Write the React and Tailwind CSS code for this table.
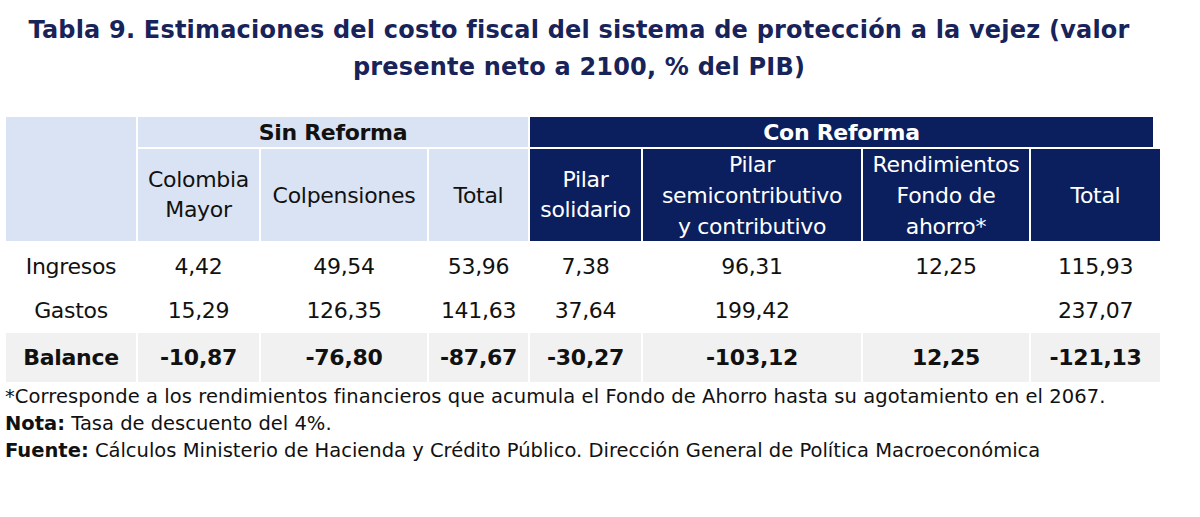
import React from 'react';

// Columnas: etiqueta, 3 sin reforma, 4 con reforma
const FONT = { fontFamily: '"DejaVu Sans", Verdana, sans-serif' };

const ROWS = [
  { label: 'Ingresos', values: ['4,42', '49,54', '53,96', '7,38', '96,31', '12,25', '115,93'] },
  { label: 'Gastos', values: ['15,29', '126,35', '141,63', '37,64', '199,42', '', '237,07'] },
];

const BALANCE = ['-10,87', '-76,80', '-87,67', '-30,27', '-103,12', '12,25', '-121,13'];

const light = 'bg-[#dae3f3] text-[#111]';
const dark = 'bg-[#0b1f5e] text-white';

export default function App() {
  return (
    <div className="w-[1200px] h-[517px] bg-white overflow-hidden" style={FONT}>
      {/* Título */}
      <div className="w-[1158px] pt-[12px] text-center text-[#18235a] text-[24px] leading-[37px] tracking-[0.2px] font-bold">
        Tabla 9. Estimaciones del costo fiscal del sistema de protección a la vejez (valor
        <br />
        presente neto a 2100, % del PIB)
      </div>

      {/* Tabla */}
      <div className="ml-[6px] mt-[31px] grid grid-cols-[130px_121px_166px_99px_111px_218px_166px_129px] gap-x-[2px] text-[22px] tracking-[-0.3px] text-[#111]">
        {/* encabezado nivel 1 */}
        <div className={`${light} row-span-2`}></div>
        <div className={`${light} col-span-3 h-[30px] flex items-center justify-center font-bold mb-[2px]`}>Sin Reforma</div>
        <div className="col-span-4 h-[30px] mb-[2px] pr-[7px]">
          <div className={`${dark} h-full flex items-center justify-center font-bold`}>Con Reforma</div>
        </div>

        {/* encabezado nivel 2 */}
        <div className={`${light} h-[92px] flex items-center justify-center text-center leading-[30px]`}>Colombia<br />Mayor</div>
        <div className={`${light} h-[92px] flex items-center justify-center`}>Colpensiones</div>
        <div className={`${light} h-[92px] flex items-center justify-center`}>Total</div>
        <div className={`${dark} h-[92px] flex items-center justify-center text-center leading-[30px]`}>Pilar<br />solidario</div>
        <div className={`${dark} h-[92px] flex items-center justify-center text-center leading-[31px]`}>Pilar<br />semicontributivo<br />y contributivo</div>
        <div className={`${dark} h-[92px] flex items-center justify-center text-center leading-[31px]`}>Rendimientos<br />Fondo de<br />ahorro*</div>
        <div className={`${dark} h-[92px] flex items-center justify-center`}>Total</div>

        {/* filas */}
        {ROWS.map((r, i) => (
          <React.Fragment key={r.label}>
            <div className={`h-[44px] flex items-center justify-center ${i === 0 ? 'mt-[3px]' : ''}`}>{r.label}</div>
            {r.values.map((v, j) => (
              <div key={j} className={`h-[44px] flex items-center justify-center ${i === 0 ? 'mt-[3px]' : ''}`}>{v}</div>
            ))}
          </React.Fragment>
        ))}

        <div className="mt-[1px] h-[49px] bg-[#f1f1f1] flex items-center justify-center font-bold">Balance</div>
        {BALANCE.map((v, j) => (
          <div key={j} className="mt-[1px] h-[49px] bg-[#f1f1f1] flex items-center justify-center font-bold">{v}</div>
        ))}
      </div>

      {/* Notas */}
      <div className="ml-[5px] mt-[1px] text-[19.5px] leading-[27px] text-[#111]">
        <div className="tracking-[0.08px]">*Corresponde a los rendimientos financieros que acumula el Fondo de Ahorro hasta su agotamiento en el 2067.</div>
        <div><span className="font-bold">Nota:</span> Tasa de descuento del 4%.</div>
        <div><span className="font-bold">Fuente:</span> Cálculos Ministerio de Hacienda y Crédito Público. Dirección General de Política Macroeconómica</div>
      </div>
    </div>
  );
}
